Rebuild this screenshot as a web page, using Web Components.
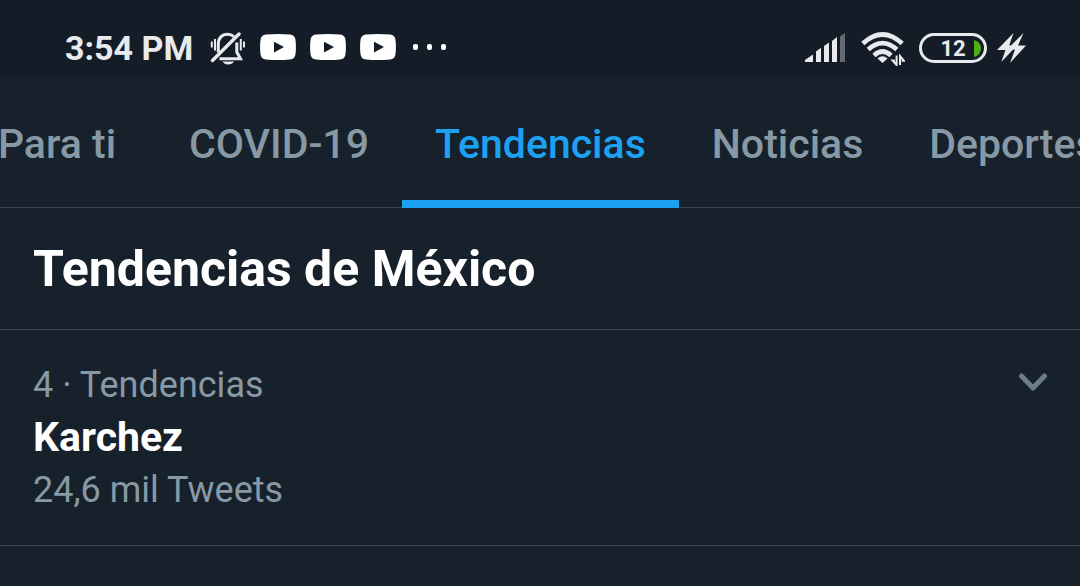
<!DOCTYPE html>
<html lang="es">
<head>
<meta charset="utf-8">
<meta name="viewport" content="width=device-width, initial-scale=1">
<title>Tendencias de México</title>
<style>
  :root {
    --bg: #17212b;
    --bar: #141d27;
    --line: #38444d;
    --muted: #8899a6;
    --accent: #1da1f2;
    --ink: #ffffff;
    --status: #e8eaed;
  }
  body {
    margin: 0;
    min-height: 100vh;
    background: var(--bg);
    color: var(--ink);
    font-family: Roboto, sans-serif;
  }
</style>
</head>
<body>
<trends-screen>
  <status-bar slot="status" time="3:54 PM" battery="12"></status-bar>
  <tab-strip slot="tabs">
    <tab-item>Para ti</tab-item>
    <tab-item>COVID-19</tab-item>
    <tab-item active>Tendencias</tab-item>
    <tab-item>Noticias</tab-item>
    <tab-item>Deportes</tab-item>
  </tab-strip>
  <section-title>Tendencias de México</section-title>
  <trend-row>
    <span slot="meta">4 · Tendencias</span>
    <span slot="name">Karchez</span>
    <span slot="count">24,6 mil Tweets</span>
  </trend-row>
</trends-screen>

<script>
  const define = (name, render) => {
    customElements.define(name, class extends HTMLElement {
      connectedCallback() {
        if (this.shadowRoot) return;
        this.attachShadow({ mode: 'open' }).innerHTML = render(this);
      }
    });
  };

  define('trends-screen', () => `
    <style>
      :host { display: flex; flex-direction: column; }
      main { display: flex; flex-direction: column; }
    </style>
    <slot name="status"></slot>
    <slot name="tabs"></slot>
    <main><slot></slot></main>`);

  define('bell-off-icon', () => `
    <style>:host { display: flex; } svg { display: block; }</style>
    <svg width="36" height="34" viewBox="0 0 36 34" fill="none" stroke="#e8eaed" stroke-width="2" aria-hidden="true">
      <path d="M1.8 9.5v6M5 7v11.5M30.800 7v11.500M34 9.5v6"/>
      <path d="M8.300 20.500V12C8.300 6 12 2.300 17.500 2.300c2.600 0 4.900.8 6.400 2.300" stroke-width="3"/>
      <path d="M26.800 10.500V20l3.700 6.800H9.500" stroke-width="3"/>
      <path d="M2.500 28.500L29 2" stroke-width="3.400" stroke-linecap="round"/>
      <path d="M12.500 29.500h11.500c-2 4-9.500 4-11.500 0z" fill="#e8eaed" stroke="none"/>
    </svg>`);

  define('video-icon', () => `
    <style>:host { display: flex; } svg { display: block; }</style>
    <svg width="36" height="26" viewBox="0 0 36 26" aria-hidden="true">
      <path d="M6 .5Q18-.5 30 .5Q35 1 35.500 6Q36.300 13 35.500 20Q35 25 30 25.500Q18 26.500 6 25.500Q1 25 .5 20Q-.3 13 .5 6Q1 1 6 .5z" fill="#fff"/>
      <path d="M14 7.800L24 13l-10 5.400z" fill="#141d27"/>
    </svg>`);

  define('signal-icon', () => `
    <style>:host { display: flex; } svg { display: block; }</style>
    <svg width="42" height="30" viewBox="0 0 42 30" fill="#e8eaed" aria-hidden="true">
      <path d="M0 29v-2l8-5.500V29z"/>
      <path d="M11 29V18.500l5-3.700V29z"/>
      <path d="M19 29V13l5-3.500V29z"/>
      <path d="M27 29V8l5-4v25z"/>
      <path d="M35 29V3.500L40 0v29z" fill="#626970"/>
    </svg>`);

  define('wifi-icon', () => `
    <style>:host { display: flex; } svg { display: block; }</style>
    <svg width="44" height="34" viewBox="0 0 44 34" fill="none" stroke="#e8eaed" stroke-width="4.700" aria-hidden="true">
      <path d="M1.800 11.500Q21.500-6.500 41.200 11.500"/>
      <path d="M7.200 17.500Q21.500 4.700 35.800 17.500"/>
      <path d="M13 23.400Q21.500 15.700 30 23.400"/>
      <path d="M16.500 26.500Q21.500 22 26.500 26.500L21.500 31z" fill="#e8eaed" stroke="none"/>
      <path d="M35.600 23.500v9.500l-4-4.500h2.300M39 33v-9l4 4.800h-2.400" stroke-width="2"/>
    </svg>`);

  define('battery-meter', el => `
    <style>
      :host {
        display: flex; align-items: center; justify-content: center;
        position: relative; box-sizing: border-box;
        width: 68px; height: 30px; padding-top: 1px;
        border: 3px solid var(--status); border-radius: 15px;
        font: 700 22px/24px Roboto, sans-serif; color: var(--status);
      }
      svg { position: absolute; right: 3px; top: 4px; }
    </style>
    <span>${el.getAttribute('level')}</span>
    <svg width="7" height="17" viewBox="0 0 7 17" aria-hidden="true"><path d="M0 0Q7 2 7 8.500T0 17z" fill="#4caf17"/></svg>`);

  define('charge-icon', () => `
    <style>:host { display: flex; } svg { display: block; }</style>
    <svg width="30" height="30" viewBox="0 0 30 30" fill="#e8eaed" aria-hidden="true">
      <path d="M16.500 0L0 17h8.500L4.300 29 17 15.500 12 13z"/>
      <path d="M26.500 0L13 13.500 18 16.500 13 30 29 12.500h-8z"/>
      <path d="M11 12l8 1.500v3L10 17z"/>
    </svg>`);

  define('status-bar', el => `
    <style>
      :host {
        display: flex; align-items: center; justify-content: space-between;
        box-sizing: border-box; min-height: 76px; padding: 20px 53px 0 65px;
        background: var(--bar); color: var(--status);
      }
      .group { display: flex; align-items: center; }
      .left { gap: 14px; }
      time { font-size: 34px; line-height: 40px; font-weight: 700; padding-right: 3px; }
      bell-off-icon { margin-top: 2px; }
      video-icon { margin-bottom: 2px; }
      .more { display: flex; gap: 9px; padding: 0 0 2px 3px; }
      .more i { width: 5px; height: 6px; border-radius: 2px; background: #fff; }
      .right { gap: 14px; }
      wifi-icon { margin-top: 2px; }
      charge-icon { margin-left: -4px; }
    </style>
    <div class="group left">
      <time>${el.getAttribute('time')}</time>
      <bell-off-icon></bell-off-icon>
      <video-icon></video-icon><video-icon></video-icon><video-icon></video-icon>
      <span class="more"><i></i><i></i><i></i></span>
    </div>
    <div class="group right">
      <signal-icon></signal-icon>
      <wifi-icon></wifi-icon>
      <battery-meter level="${el.getAttribute('battery')}"></battery-meter>
      <charge-icon></charge-icon>
    </div>`);

  define('tab-item', el => `
    <style>
      :host { display: flex; flex: none; min-width: 198px; }
      a {
        flex: 1; box-sizing: border-box; text-align: center; white-space: nowrap;
        padding: 44px 33px 32px; border-bottom: 8px solid transparent;
        font-size: 41px; line-height: 48px; font-weight: 500;
        color: var(--muted); text-decoration: none;
      }
      :host([active]) a { color: var(--accent); border-color: var(--accent); }
    </style>
    <a href="#"${el.hasAttribute('active') ? ' aria-current="page"' : ''}><slot></slot></a>`);

  define('tab-strip', () => `
    <style>
      :host { display: block; }
      nav {
        display: flex; overflow-x: auto; scrollbar-width: none;
        background: linear-gradient(var(--line), var(--line)) bottom / 100% 1px no-repeat;
      }
    </style>
    <nav><slot></slot></nav>`);

  define('section-title', () => `
    <style>
      :host { display: block; padding: 31px 33px 30px; border-bottom: 1px solid var(--line); }
      h1 { margin: 0; font-size: 50px; line-height: 60px; font-weight: 700; }
    </style>
    <h1><slot></slot></h1>`);

  define('trend-row', () => `
    <style>
      :host {
        display: flex; align-items: flex-start; justify-content: space-between;
        padding: 30px 32px 30px 33px; border-bottom: 1px solid var(--line);
      }
      p, h2 { margin: 0; }
      p { font-size: 36px; line-height: 50px; color: var(--muted); }
      h2 { font-size: 41px; line-height: 55px; font-weight: 700; }
      button { margin: 0; padding: 12px 0; border: 0; background: none; display: flex; }
    </style>
    <div>
      <p><slot name="meta"></slot></p>
      <h2><slot name="name"></slot></h2>
      <p><slot name="count"></slot></p>
    </div>
    <button type="button" aria-label="Más opciones">
      <svg width="30" height="20" viewBox="0 0 30 20" fill="none" stroke="#6b7d8c" stroke-width="5" stroke-linecap="round" stroke-linejoin="round" aria-hidden="true"><path d="M3.500 4L15 16 26.500 4"/></svg>
    </button>`);

  /* Keep the active tab in the middle of the strip. */
  const strip = document.querySelector('tab-strip');
  const nav = strip.shadowRoot.querySelector('nav');
  const centerActive = () => {
    const a = strip.querySelector('[active]').getBoundingClientRect();
    const n = nav.getBoundingClientRect();
    nav.scrollLeft += Math.round(a.left + a.width / 2 - n.left - n.width / 2);
  };
  centerActive();
  addEventListener('resize', centerActive);
</script>
</body>
</html>
